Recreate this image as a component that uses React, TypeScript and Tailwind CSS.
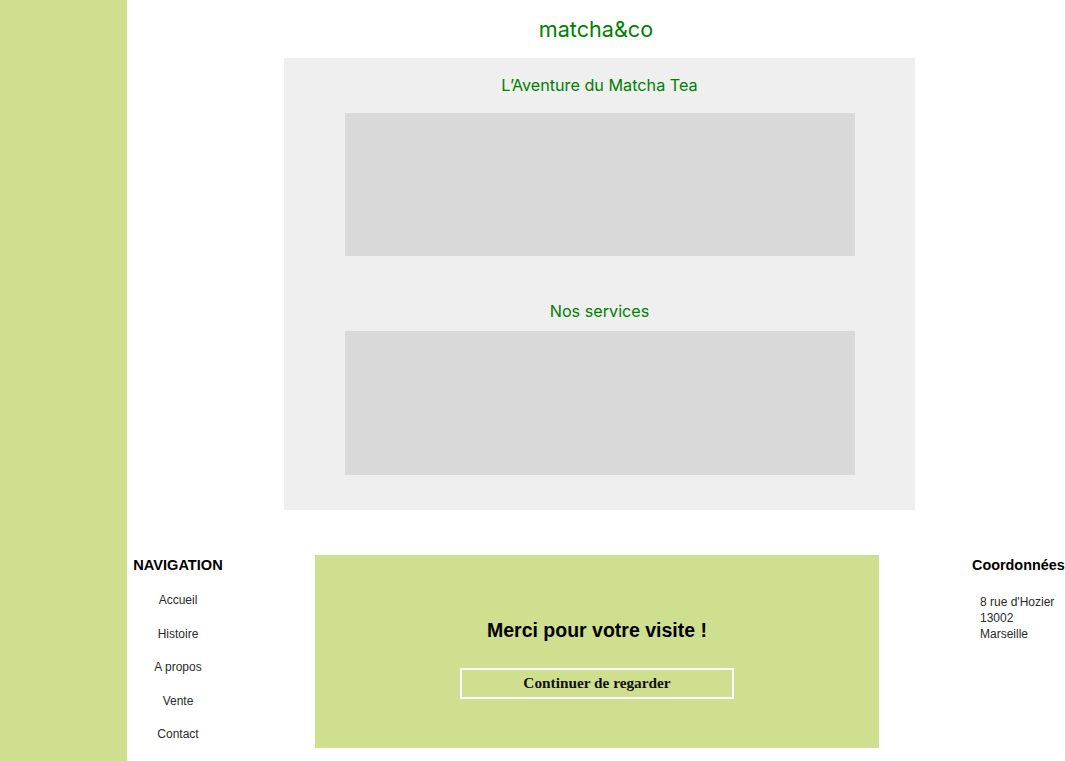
import React from 'react';

const NAV_LINKS = ['Accueil', 'Histoire', 'A propos', 'Vente', 'Contact'];

const sans = { fontFamily: '"Liberation Sans", Arial, sans-serif' };

export default function App() {
  return (
    <div className="flex min-h-[761px] w-full bg-white">
      {/* side band */}
      <aside className="w-[127px] shrink-0 bg-[#cfdf90]" />

      <main className="flex flex-1 flex-col">
        <header className="flex h-[58px] items-start justify-center pt-[15px]">
          <h1 className="font-['Inter',sans-serif] text-[21.6px] leading-[28px] text-[#008000]">matcha&amp;co</h1>
        </header>

        <section className="ml-[157px] flex w-[631px] flex-col items-center bg-[#efefef] pt-[15px] pb-[35px]">
          <h2 className="font-['Inter',sans-serif] text-[16.2px] leading-[24px] text-[#008000]">L’Aventure du Matcha Tea</h2>
          <div className="mt-[16px] h-[143px] w-[510px] bg-[#d9d9d9]" />
          <h2 className="mt-[43px] font-['Inter',sans-serif] text-[16.2px] leading-[24px] text-[#008000]">Nos services</h2>
          <div className="mt-[8px] h-[144px] w-[510px] bg-[#d9d9d9]" />
        </section>

        <footer className="mt-[45px] flex items-start pl-[6px] pb-[13px]" style={sans}>
          <nav className="flex w-[90px] flex-col items-center">
            <h3 className="text-[14.6px] font-bold leading-[20px] text-black">NAVIGATION</h3>
            <ul className="mt-[17px] flex flex-col items-center gap-[17.5px]">
              {NAV_LINKS.map(link => (
                <li key={link} className="text-[12px] leading-[16px] text-[#2a2a2a]">{link}</li>
              ))}
            </ul>
          </nav>

          <div className="ml-[92px] flex h-[193px] w-[564px] flex-col items-center bg-[#cfdf90] pt-[63px]">
            <p className="text-[19.5px] font-bold leading-[24px] text-black">Merci pour votre visite !</p>
            <button className="mt-[26px] flex h-[31px] w-[274px] items-center justify-center border-2 border-white font-['Liberation_Serif',serif] text-[15.3px] font-bold text-[#111]">
              Continuer de regarder
            </button>
          </div>

          <div className="ml-[93px] flex flex-col">
            <h3 className="text-[14.4px] font-bold leading-[20px] text-black">Coordonnées</h3>
            <div className="mt-[19px] pl-2 text-[12px] leading-[16px] text-[#2a2a2a]">
              <p>8 rue d'Hozier</p>
              <p>13002</p>
              <p>Marseille</p>
            </div>
          </div>
        </footer>
      </main>
    </div>
  );
}
